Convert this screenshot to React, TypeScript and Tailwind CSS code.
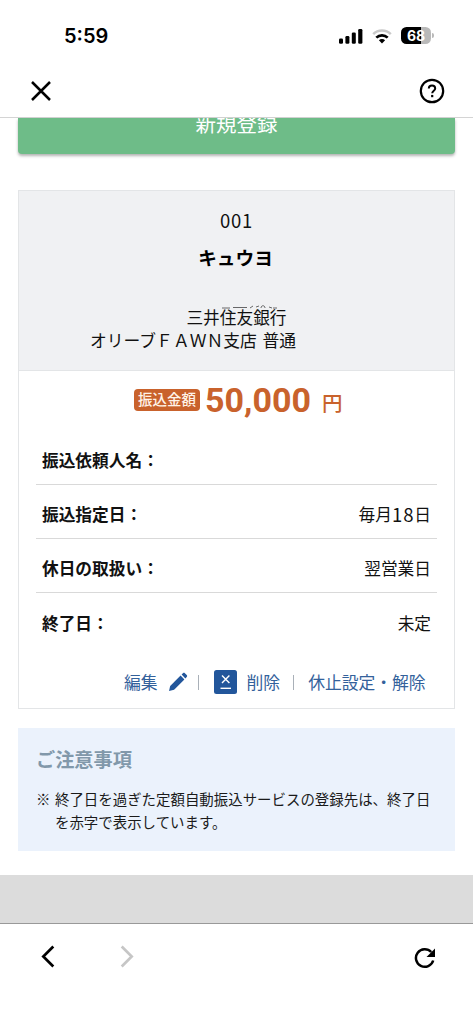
import React from 'react';

const details = [
  { label: '振込依頼人名', value: <></> },
  {
    label: '振込指定日',
    value: (
      <>
        毎月<span className="text-[18.5px] leading-[16px] tracking-[0.9px]">18</span>日
      </>
    ),
  },
  { label: '休日の取扱い', value: <>翌営業日</> },
  { label: '終了日', value: <>未定</> },
];

const StatusBar: React.FC = () => (
  <div className="flex h-[70px] items-center justify-between pt-px pr-[39px] pl-[64px] font-['Inter',sans-serif]">
    <span className="text-[20px] leading-none font-semibold">5:59</span>
    <div className="flex items-center">
      <svg width="24" height="16" viewBox="0 0 24 16">
        <rect x="0" y="10.5" width="4" height="5.2" rx="1.3" />
        <rect x="6.4" y="8" width="4" height="7.7" rx="1.3" />
        <rect x="12.8" y="4.5" width="4" height="11.2" rx="1.3" />
        <rect x="19.2" y="1" width="4.2" height="14.7" rx="1.3" />
      </svg>
      <svg className="ml-[9px]" width="20" height="16" viewBox="0 0 20 16" fill="none">
        <path d="M1.2 6.2a12.5 12.5 0 0 1 17.6 0" stroke="#c9c9c9" strokeWidth="2.5" />
        <path d="M4.3 9.6a8.2 8.2 0 0 1 11.4 0" stroke="#000" strokeWidth="2.7" />
        <path d="M10 15.4 6.9 12.3a4.4 4.4 0 0 1 6.2 0Z" fill="#000" />
      </svg>
      <div className="ml-[9px] flex h-[17px] w-[30px] items-center justify-center rounded-[5.5px] bg-linear-to-r from-black from-68% to-[#b9b9b9] to-68% text-[14px] leading-none font-bold text-white">
        68
      </div>
      <div className="ml-px h-[5px] w-[2px] rounded-r-full bg-[#b9b9b9]" />
    </div>
  </div>
);

const NavHeader: React.FC = () => (
  <header className="flex h-[48px] items-center justify-between border-b border-[#d4d4d4] pr-[28px] pb-[5px] pl-[31px]">
    <svg width="20" height="20" viewBox="0 0 20 20" stroke="#000" strokeWidth="2.5">
      <path d="M1 1l18 18M19 1L1 19" />
    </svg>
    <svg width="26" height="26" viewBox="0 0 26 26" fill="none" stroke="#000">
      <circle cx="13" cy="13" r="11.2" strokeWidth="2.2" />
      <path d="M9.8 10.6c0-1.9 1.3-3.1 3.2-3.1s3.2 1.2 3.2 2.9c0 2.3-3 2.4-3 4.9" strokeWidth="2" />
      <path d="M13.2 16.9v2.3" strokeWidth="2.2" />
    </svg>
  </header>
);

const Actions: React.FC = () => (
  <div className="mt-[23px] flex h-[24px] items-center pl-[105px] text-[16.8px] leading-none whitespace-nowrap text-[#33619b]">
    <span>編集</span>
    <svg className="ml-[10px]" width="20" height="20" viewBox="0 0 20 20" fill="#22569b">
      <path d="M1 19l1.2-5.1L12.6 3.6l3.8 3.8L6.1 17.7z" />
      <path d="M13.6 2.6l1.3-1.3c.6-.6 1.4-.6 2 0l1.8 1.8c.6.6.6 1.4 0 2l-1.3 1.3z" />
    </svg>
    <span className="ml-[10px] h-[15px] w-px bg-[#a9b0b8]" />
    <svg className="ml-[15px]" width="23" height="24" viewBox="0 0 23 24" fill="none" stroke="#fff">
      <rect width="23" height="24" rx="2.5" fill="#22569b" stroke="none" />
      <path d="M8 5.5l7.4 7.4M15.4 5.5L8 12.9" strokeWidth="1.4" />
      <path d="M6.5 18.3h10.5" strokeWidth="1.4" />
    </svg>
    <span className="ml-[10px]">削除</span>
    <span className="ml-[13px] h-[15px] w-px bg-[#a9b0b8]" />
    <span className="ml-[14px]">休止設定・解除</span>
  </div>
);

const TransferCard: React.FC = () => (
  <section className="mx-[18px] mt-[36px] h-[519px] border border-[#e3e5e7]">
    <div className="relative h-[180px] border-b border-[#e3e5e7] bg-[#f0f1f3] text-center text-[#111]">
      <p className="pt-[16px] text-[18.5px] leading-[26px] tracking-[0.7px]">001</p>
      <p className="mt-[11px] pr-[2px] text-[18.7px] leading-[26px] font-bold text-black">キュウヨ</p>
      <p className="mt-[36px] text-[16.7px] leading-[23px]">三井住友銀行</p>
      <p className="pl-[71px] text-left text-[16.8px] leading-[23px] whitespace-pre">
        オリーブＦＡＷＮ支店 <span className="ml-[2px]">普通</span>
      </p>
      {/* leftover strokes of the masked line above the bank name */}
      <svg className="absolute top-[112px] left-[203px]" width="56" height="8" fill="none" stroke="#444" strokeWidth="0.8">
        <path d="M0 5h8M11 4.5h14M28 5l3-2M34 4l3-1M39 5c0-3 4-3 4 0M47 4l3 1M51 5h4" />
      </svg>
    </div>

    <div className="flex h-[58px] items-center pl-[115px] text-[#c9622c]">
      <span className="flex h-[22px] w-[66px] items-center justify-center rounded-[4px] bg-[#c9622c] pb-px text-[14.5px] leading-none font-medium text-[#fff3e8]">
        振込金額
      </span>
      <span className="ml-[5px] font-['Roboto',sans-serif] text-[34px] leading-none font-bold">50,000</span>
      <span className="mt-[4px] ml-[11px] text-[20.5px] leading-none font-medium">円</span>
    </div>

    <dl className="mx-[17px] mt-[2px]">
      {details.map((d) => (
        <div
          key={d.label}
          className="flex h-[54px] items-center justify-between border-b border-[#d9d9d9] pt-[6px] pr-[6px] pl-[6px] text-[16.7px] leading-none last:border-0"
        >
          <dt className="font-bold text-[#111]">{d.label}：</dt>
          <dd className="flex items-center text-[#111]">{d.value}</dd>
        </div>
      ))}
    </dl>

    <Actions />
  </section>
);

const Notice: React.FC = () => (
  <section className="mx-[18px] mt-[19px] h-[123px] bg-[#ebf2fc] pt-[18px] pl-[18px]">
    <h2 className="text-[19.2px] leading-[26px] font-bold text-[#8198aa]">ご注意事項</h2>
    <div className="mt-[15px] flex text-[14.45px] leading-[23px] text-[#1a1a1a]">
      <span className="w-[19px] shrink-0">※</span>
      <p className="whitespace-nowrap">
        終了日を過ぎた定額自動振込サービスの登録先は、終了日
        <br />
        を赤字で表示しています。
      </p>
    </div>
  </section>
);

const BrowserToolbar: React.FC = () => (
  <footer className="flex h-[101px] items-start border-t border-[#999] bg-white pt-[21px] pl-[41px]">
    <svg width="14" height="23" viewBox="0 0 14 23" fill="none" stroke="#000" strokeWidth="2.7">
      <path d="M12.3 1.5L2.3 11.5l10 10" />
    </svg>
    <svg className="ml-[65px]" width="14" height="23" viewBox="0 0 14 23" fill="none" stroke="#c6c6c6" strokeWidth="2.7">
      <path d="M1.7 1.5l10 10-10 10" />
    </svg>
    <svg className="mt-[2px] ml-[280px]" width="22" height="22" viewBox="0 0 22 22" fill="none">
      <path d="M19.2 13.5A8.8 8.8 0 1 1 17.2 5" stroke="#000" strokeWidth="2.5" />
      <path d="M21 1.5v8.5h-8.5z" fill="#000" />
    </svg>
  </footer>
);

export default function App() {
  return (
    <div className="h-[1024px] w-[473px] overflow-hidden bg-white font-['Noto_Sans_CJK_JP',sans-serif] text-black">
      <StatusBar />
      <NavHeader />
      <div className="h-[36px] px-[18px]">
        <button className="block h-[36px] w-full rounded-b-[4px] bg-[#6ebc88] shadow-[0_2px_3px_rgba(0,0,0,0.3)]">
          <span className="block h-full overflow-hidden text-[20.5px] leading-[11px] text-white">新規登録</span>
        </button>
      </div>
      <TransferCard />
      <Notice />
      <div className="mt-[24px] h-[48px] bg-[#dcdcdc]" />
      <BrowserToolbar />
    </div>
  );
}
